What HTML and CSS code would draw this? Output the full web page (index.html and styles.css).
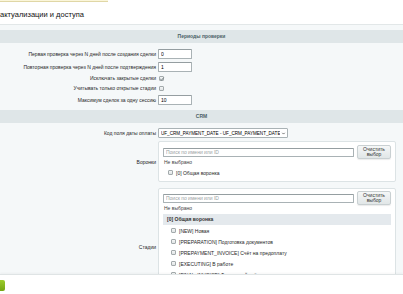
FILE: index.html
```html
<!DOCTYPE html>
<html lang="ru">
  <head>
    <meta charset="UTF-8" />
    <meta name="viewport" content="width=device-width, initial-scale=1.0" />
    <title>Настройки актуализации и доступа</title>
    <link rel="stylesheet" href="styles.css">
  </head>
  <body>
    <div class="notice"></div>
    <h1 class="pageTitle">актуализации и доступа</h1>

    <div class="panel">
      <div class="heading">Периоды проверки</div>
      <div class="fields">
        <label class="fieldLabel" for="first-check">Первая проверка через N дней после создания сделки</label>
        <div class="fieldValue"><input type="text" id="first-check" value="0" /></div>

        <label class="fieldLabel" for="repeat-check">Повторная проверка через N дней после подтверждения</label>
        <div class="fieldValue"><input type="text" id="repeat-check" value="1" /></div>

        <div class="fieldLabel short">Исключать закрытые сделки</div>
        <div class="fieldValue short">
          <span class="checkbox checked">
            <svg viewBox="0 0 6 6" width="6" height="6"><path d="M1.3 3.1 L2.5 4.2 L4.7 1.6" fill="none" stroke="#5f6b6e" stroke-width="0.8"/></svg>
          </span>
        </div>

        <div class="fieldLabel short">Учитывать только открытые стадии</div>
        <div class="fieldValue short"><span class="checkbox"></span></div>

        <label class="fieldLabel" for="max-deals">Максимум сделок за одну сессию</label>
        <div class="fieldValue"><input type="text" id="max-deals" value="10" /></div>
      </div>

      <div class="heading">CRM</div>
      <div class="fields crm">
        <div class="fieldLabel">Код поля даты оплаты</div>
        <div class="fieldValue">
          <div class="select">
            <span class="selectText">UF_CRM_PAYMENT_DATE - UF_CRM_PAYMENT_DATE</span>
            <svg viewBox="0 0 6 6" width="5" height="5"><path d="M1.5 2.2 L3 3.7 L4.5 2.2" fill="none" stroke="#333" stroke-width="0.8"/></svg>
          </div>
        </div>

        <div class="fieldLabel">Воронки</div>
        <div class="fieldValue">
          <div class="picker">
            <div class="pickerSearch">
              <input type="text" placeholder="Поиск по имени или ID" />
              <button type="button">Очистить<br />выбор</button>
            </div>
            <div class="pickerEmpty">Не выбрано</div>
            <div class="pickerItem"><span class="checkbox"></span>[0] Общая воронка</div>
          </div>
        </div>

        <div class="fieldLabel">Стадии</div>
        <div class="fieldValue">
          <div class="picker stages">
            <div class="pickerSearch">
              <input type="text" placeholder="Поиск по имени или ID" />
              <button type="button">Очистить<br />выбор</button>
            </div>
            <div class="pickerEmpty">Не выбрано</div>
            <div class="pickerGroup">[0] Общая воронка</div>
            <div class="pickerItem sub"><span class="checkbox"></span>[NEW] Новая</div>
            <div class="pickerItem sub"><span class="checkbox"></span>[PREPARATION] Подготовка документов</div>
            <div class="pickerItem sub"><span class="checkbox"></span>[PREPAYMENT_INVOICE] Счёт на предоплату</div>
            <div class="pickerItem sub"><span class="checkbox"></span>[EXECUTING] В работе</div>
            <div class="pickerItem sub"><span class="checkbox"></span>[FINAL_INVOICE] Финальный счёт</div>
            <div class="pickerItem sub"><span class="checkbox"></span>[WON] Сделка успешна</div>
            <div class="pickerItem sub"><span class="checkbox"></span>[LOSE] Сделка провалена</div>
          </div>
        </div>
      </div>
    </div>

    <div class="footer">
      <button type="button" class="saveBtn" aria-label="Сохранить"></button>
    </div>
  </body>
</html>
```

FILE: styles.css
```css
/* Reset some default styles */
body,
h1 {
  margin: 0;
  padding: 0;
}

body {
  font-family: "Liberation Sans", Arial, sans-serif;
  font-size: 5px;
  color: #1f1f1f;
  background-color: #fff;
}

.notice {
  width: 108px;
  height: 1px;
  background-color: #fbf6da;
  border-bottom: 1px solid #e0d7a6;
}

.pageTitle {
  font-size: 7.5px;
  font-weight: normal;
  color: #111;
  line-height: 18px;
  padding-top: 4px;
  border-bottom: 1px solid #e2e7e8;
}

.panel {
  background-color: #f5f8f9;
  padding: 5px 0 40px;
}

.heading {
  height: 13px;
  line-height: 13px;
  text-align: center;
  font-weight: bold;
  color: #4b6267;
  background-color: #dfe6e8;
}

.fields {
  display: grid;
  grid-template-columns: 156px 1fr;
  column-gap: 2px;
  row-gap: 3px;
  padding: 6px 7px 5px 0;
  align-items: center;
}

.fields.crm {
  padding-top: 5px;
}

.fieldLabel {
  text-align: right;
  line-height: 10px;
}

.fieldLabel.short,
.fieldValue.short {
  line-height: 7px;
  height: 7px;
}

.fieldValue {
  display: flex;
  align-items: center;
}

input[type="text"] {
  box-sizing: border-box;
  width: 34px;
  height: 10px;
  padding: 0 2px;
  font-family: inherit;
  font-size: 5px;
  color: #000;
  border: 1px solid #a9b2b5;
  border-top-color: #959ea1;
  border-radius: 1px;
  background-color: #fff;
  outline: none;
}

input::placeholder {
  color: #9aa1a3;
}

.checkbox {
  box-sizing: border-box;
  display: inline-flex;
  align-items: center;
  justify-content: center;
  width: 5px;
  height: 5px;
  margin-left: 1px;
  border: 1px solid #a3aaac;
  border-radius: 1px;
  background: linear-gradient(#f4f6f6, #dfe3e4);
}

.checkbox svg {
  flex: none;
}

.select {
  box-sizing: border-box;
  width: 130px;
  height: 10px;
  display: flex;
  align-items: center;
  justify-content: space-between;
  padding: 0 1px 0 2px;
  color: #000;
  background-color: #fff;
  border: 1px solid #a9b2b5;
  border-radius: 1px;
}

.selectText {
  white-space: nowrap;
  overflow: hidden;
  font-size: 4.6px;
}

.picker {
  box-sizing: border-box;
  width: 100%;
  padding: 3px 4px 5px;
  background-color: #fff;
  border: 1px solid #dce3e5;
  border-radius: 2px;
}

.picker.stages {
  margin-top: 3px;
  padding-top: 2px;
}

.pickerSearch {
  display: flex;
  align-items: center;
  gap: 3px;
}

.pickerSearch input[type="text"] {
  flex: 1;
  height: 9px;
  color: #999;
}

.pickerSearch button {
  width: 34px;
  height: 14px;
  padding: 0;
  font-family: inherit;
  font-size: 5px;
  line-height: 5.5px;
  color: #333;
  background: linear-gradient(#f5f7f7, #e1e6e7);
  border: 1px solid #c9d0d2;
  border-radius: 2px;
  box-shadow: 0 1px 1px rgba(0, 0, 0, 0.08);
}

.pickerEmpty {
  line-height: 6px;
  margin-left: 1px;
  color: #444;
}

.pickerItem {
  display: flex;
  align-items: center;
  gap: 3px;
  height: 7px;
  margin-top: 4px;
  padding-left: 4px;
}

.pickerGroup {
  height: 11px;
  line-height: 11px;
  margin-top: 2px;
  padding-left: 4px;
  font-weight: bold;
  color: #333;
  background-color: #e4e9ed;
}

.stages .pickerGroup {
  margin-top: 3px;
}

.pickerItem.sub {
  height: 11px;
  margin-top: 0;
  padding-left: 7px;
}

/* Fixed bottom bar with the save button */
.footer {
  position: fixed;
  left: 0;
  right: 0;
  bottom: 0;
  height: 19px;
  background-color: #fff;
  border-top: 1px solid #dfe4e5;
  box-shadow: 0 -1px 2px rgba(0, 0, 0, 0.04);
}

.saveBtn {
  display: block;
  margin: 5px 0 0 -40px;
  width: 45px;
  height: 11px;
  padding: 0;
  border: none;
  border-radius: 2px;
  background: linear-gradient(#9ccc2c, #74a513);
}
```
